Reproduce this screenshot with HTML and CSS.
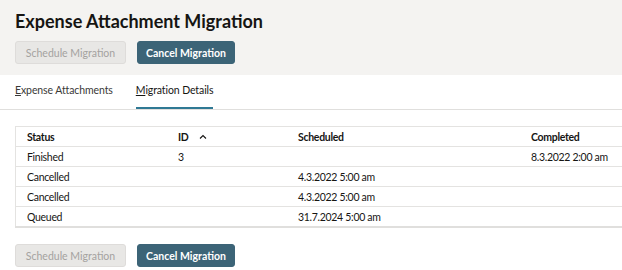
FILE: index.html
```html
<!DOCTYPE html>
<html lang="en">
<head>
  <meta charset="UTF-8">
  <title>Expense Attachment Migration</title>
  <link rel="stylesheet" href="styles.css">
</head>
<body>

  <div class="header">
    <h1>Expense Attachment Migration</h1>
    <div class="actions">
      <button class="btn-disabled" disabled>Schedule Migration</button>
      <button class="btn-primary">Cancel Migration</button>
    </div>
  </div>

  <div class="tabs">
    <div class="tab"><u>E</u>xpense Attachments</div>
    <div class="tab active"><u>M</u>igration Details</div>
  </div>

  <div class="table-wrap">
    <table>
      <thead>
        <tr>
          <th class="col-status">Status</th>
          <th class="col-id">ID
            <svg class="sort" width="8" height="5" viewBox="0 0 8 5"><path d="M1 4.5 L4 1.5 L7 4.5" fill="none" stroke="#161513" stroke-width="1.1"/></svg>
          </th>
          <th class="col-sched">Scheduled</th>
          <th>Completed</th>
        </tr>
      </thead>
      <tbody>
        <tr><td>Finished</td><td>3</td><td></td><td>8.3.2022 2:00 am</td></tr>
        <tr><td>Cancelled</td><td></td><td>4.3.2022 5:00 am</td><td></td></tr>
        <tr><td>Cancelled</td><td></td><td>4.3.2022 5:00 am</td><td></td></tr>
        <tr><td>Queued</td><td></td><td>31.7.2024 5:00 am</td><td></td></tr>
      </tbody>
    </table>
  </div>

  <div class="actions bottom">
    <button class="btn-disabled" disabled>Schedule Migration</button>
    <button class="btn-primary">Cancel Migration</button>
  </div>

</body>
</html>
```

FILE: styles.css
```css
body {
  margin: 0;
  font-family: Lato, sans-serif;
  font-size: 10.5px;
  color: #161513;
  background-color: #ffffff;
  overflow: hidden;
}

.header {
  background-color: #f4f3f1;
  padding: 9px 15px 11px;
  height: 55px;
}

h1 {
  margin: 0 0 8px;
  font-size: 18px;
  font-weight: bold;
  line-height: 24px;
}

.actions {
  display: flex;
  gap: 11px;
}

button {
  font-family: Lato, sans-serif;
  font-size: 10.5px;
  height: 23px;
  border-radius: 3px;
  padding: 0;
  white-space: nowrap;
}

.btn-disabled {
  background-color: #e8e7e5;
  border: 1px solid #dedcda;
  color: #a4a2a0;
  width: 111px;
}

.btn-primary {
  background-color: #3c6477;
  border: 1px solid #3c6477;
  color: #ffffff;
  font-weight: bold;
  width: 98px;
}

.tabs {
  display: flex;
  gap: 23px;
  padding: 0 15px;
  border-bottom: 1px solid #e0dfdd;
  height: 34px;
}

.tab {
  padding-top: 9px;
  height: 23px;
  color: #3a3937;
  letter-spacing: -0.1px;
}

.tab.active {
  color: #161513;
  border-bottom: 2px solid #2f7994;
}

.table-wrap {
  margin: 16px 0 0 15px;
  overflow: hidden;
}

table {
  width: 640px;
  border-collapse: collapse;
  border-top: 1px solid #e4e3e1;
  border-left: 1px solid #e4e3e1;
  border-bottom: 2px solid #e0dfdd;
}

th, td {
  text-align: left;
  height: 19px;
  padding: 0 0 0 11px;
  border-bottom: 1px solid #e4e3e1;
  white-space: nowrap;
  letter-spacing: -0.3px;
}

th {
  font-weight: bold;
}

.col-status {
  width: 140px;
}

.col-id {
  width: 109px;
}

.col-sched {
  width: 222px;
}

.sort {
  margin-left: 8px;
  vertical-align: 2px;
}

.actions.bottom {
  margin: 16px 15px 0;
}
```
